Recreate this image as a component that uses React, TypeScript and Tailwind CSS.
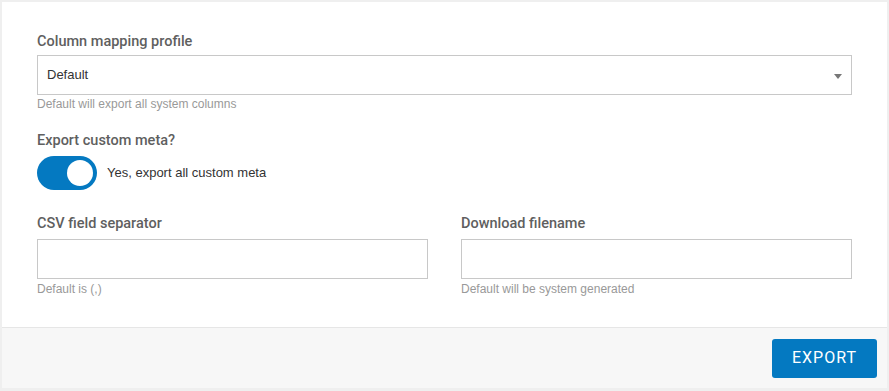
export default function App() {
  return (
    <div
      className="h-[391px] w-[889px] bg-[#efefef] p-[2px]"
      style={{ fontFamily: '"Liberation Sans", Arial, sans-serif' }}
    >
      <div className="flex h-[386px] w-[885px] flex-col bg-white">
        <div className="flex-1 px-[35px] pt-[30px]">
          <label className="block text-[14.5px] leading-5 font-medium text-[#5f5f5f]" style={{ fontFamily: "Roboto, sans-serif" }}>
            Column mapping profile
          </label>
          <div className="relative mt-[3px] flex h-10 items-center border border-[#c8c8c8] pl-[9px] text-[13px] text-[#333]">
            Default
            <span className="absolute top-[18px] right-[9px] h-0 w-0 border-x-[4px] border-t-[5px] border-x-transparent border-t-[#777]" />
          </div>
          <p className="mt-[1px] text-[12px] leading-4 text-[#999]">Default will export all system columns</p>

          <label className="mt-[19px] block text-[14.5px] leading-5 font-medium text-[#5f5f5f]" style={{ fontFamily: "Roboto, sans-serif" }}>
            Export custom meta?
          </label>
          <div className="mt-[5px] flex items-center gap-[10px]">
            <div className="flex h-[34px] w-[60px] items-center justify-end rounded-full bg-[#0479c1] pr-[4px]">
              <div className="h-[26px] w-[26px] rounded-full bg-white" />
            </div>
            <span className="text-[13px] text-[#333]">Yes, export all custom meta</span>
          </div>

          <div className="mt-6 grid grid-cols-2 gap-[33px]">
            <div>
              <label className="block text-[14.5px] leading-5 font-medium text-[#5f5f5f]" style={{ fontFamily: "Roboto, sans-serif" }}>
                CSV field separator
              </label>
              <input className="mt-[5px] block h-10 w-full border border-[#c8c8c8] outline-none" />
              <p className="mt-[2px] text-[12px] leading-4 text-[#999]">Default is (,)</p>
            </div>
            <div>
              <label className="block text-[14.5px] leading-5 font-medium text-[#5f5f5f]" style={{ fontFamily: "Roboto, sans-serif" }}>
                Download filename
              </label>
              <input className="mt-[5px] block h-10 w-full border border-[#c8c8c8] outline-none" />
              <p className="mt-[2px] text-[12px] leading-4 text-[#999]">Default will be system generated</p>
            </div>
          </div>
        </div>
        <div className="flex h-[61px] items-center justify-end border-t border-[#e6e6e6] bg-[#f7f7f7] pr-[10px]">
          <button
            className="h-[39px] w-[105px] rounded-[3px] bg-[#0479c1] text-[16px] tracking-[1px] text-white"
            style={{ fontFamily: "Roboto, sans-serif" }}
          >
            EXPORT
          </button>
        </div>
      </div>
    </div>
  );
}
